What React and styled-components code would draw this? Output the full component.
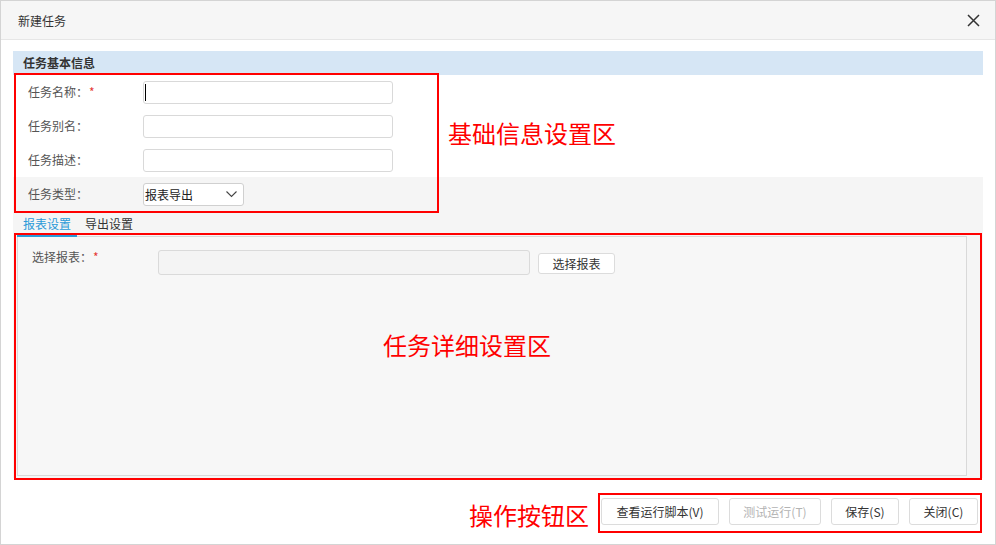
import React from "react";
import styled, { createGlobalStyle } from "styled-components";

const GlobalStyle = createGlobalStyle`
  body {
    margin: 0;
    background: #fff;
    font-family: "Noto Sans CJK SC", "Noto Sans", sans-serif;
    font-size: 12px;
    color: #333;
  }
`;

const Dialog = styled.div`
  position: relative;
  width: 996px;
  height: 545px;
  box-sizing: border-box;
  border: 1px solid #d4d4d4;
  display: flex;
  flex-direction: column;
  background: #fff;
`;

const TitleBar = styled.div`
  height: 39px;
  flex-shrink: 0;
  box-sizing: border-box;
  display: flex;
  align-items: center;
  justify-content: space-between;
  padding: 0 15px 0 17px;
  background: #f6f6f6;
  border-bottom: 1px solid #e6e6e6;
  font-size: 12px;
  color: #333;
`;

const CloseBtn = styled.button`
  border: 0;
  background: none;
  padding: 0;
  width: 14px;
  height: 14px;
  display: flex;
  align-items: center;
  justify-content: center;
  cursor: pointer;
`;

const Body = styled.div`
  padding: 11px 12px 0 12px;
`;

const SectionHeader = styled.div`
  height: 24px;
  line-height: 24px;
  padding-left: 10px;
  background: #d6e6f5;
  font-weight: bold;
  font-size: 12px;
  color: #333;
`;

const Row = styled.div`
  height: 34px;
  display: flex;
  align-items: center;
  padding-left: 15px;
  background: ${(p) => (p.$gray ? "#f5f5f5" : "#fff")};
`;

const Label = styled.span`
  width: ${(p) => p.$width || 115}px;
  flex-shrink: 0;
  color: #555;
  font-size: 12px;
  line-height: 14px;
`;

const Star = styled.span`
  color: #e53935;
  margin-left: 1px;
`;

const InputWrap = styled.span`
  position: relative;
  display: inline-flex;

  &::after {
    content: "";
    display: ${(p) => (p.$caret ? "block" : "none")};
    position: absolute;
    left: 2px;
    top: 3px;
    width: 1px;
    height: 17px;
    background: #000;
  }
`;

const TextInput = styled.input`
  width: 250px;
  height: 23px;
  box-sizing: border-box;
  border: 1px solid #d9d9d9;
  border-radius: 3px;
  padding: 0 2px;
  font: inherit;
  outline: none;
  caret-color: transparent;
  background: #fff;
`;

const Select = styled.div`
  width: 101px;
  height: 23px;
  box-sizing: border-box;
  border: 1px solid #d0d0d0;
  border-radius: 3px;
  background: #fff;
  display: flex;
  align-items: center;
  justify-content: space-between;
  padding: 0 6px 0 1px;
  color: #222;
`;

const GrayArea = styled.div`
  background: #f5f5f5;
  height: 301px;
`;

const TabBar = styled.div`
  height: 25px;
  display: flex;
  gap: 2px;
  padding-left: 4px;
  box-sizing: border-box;
`;

const Tab = styled.div`
  padding: 0 6px;
  display: flex;
  align-items: center;
  box-sizing: border-box;
  border-bottom: 2px solid ${(p) => (p.$active ? "#2a9ad8" : "transparent")};
  color: ${(p) => (p.$active ? "#2a9ad8" : "#333")};
  font-size: 12px;
  margin-bottom: -1px;
  position: relative;
  z-index: 1;
`;

const Panel = styled.div`
  margin: 0 16px 0 4px;
  height: 240px;
  box-sizing: border-box;
  border: 1px solid #d9d9d9;
  background: #f7f7f7;
  padding: 13px 14px;
  display: flex;
  align-items: flex-start;
`;

const WideInput = styled.div`
  width: 372px;
  height: 25px;
  box-sizing: border-box;
  border: 1px solid #dadada;
  border-radius: 3px;
  background: #f4f4f4;
`;

const Button = styled.button`
  height: ${(p) => p.$h || 27}px;
  width: ${(p) => p.$w}px;
  box-sizing: border-box;
  border: 1px solid #dcdcdc;
  border-radius: 3px;
  background: #fff;
  font: inherit;
  font-size: 12px;
  color: ${(p) => (p.disabled ? "#b3b3b3" : "#333")};
  padding: 0;
  cursor: ${(p) => (p.disabled ? "default" : "pointer")};
`;

const SmallButton = styled(Button)`
  margin: 3px 0 0 8px;
`;

const Footer = styled.div`
  display: flex;
  justify-content: flex-end;
  gap: 10px;
  padding: 20px 17px 0 0;
`;

const MarkBox = styled.div`
  position: absolute;
  box-sizing: border-box;
  border: 2px solid #ff0000;
  pointer-events: none;
`;

const MarkText = styled.div`
  position: absolute;
  color: #ff0000;
  font-size: 24px;
  line-height: 30px;
  white-space: nowrap;
  pointer-events: none;
`;

const marks = [
  { left: 13, top: 72, width: 425, height: 140 },
  { left: 13, top: 232, width: 968, height: 247 },
  { left: 597, top: 492, width: 384, height: 40 },
];

const notes = [
  { left: 447, top: 117, text: "基础信息设置区" },
  { left: 382, top: 329, text: "任务详细设置区" },
  { left: 468, top: 499, text: "操作按钮区" },
];

const App = () => {
  return (
    <>
      <GlobalStyle />
      <Dialog>
        <TitleBar>
          <span>新建任务</span>
          <CloseBtn aria-label="close">
            <svg width="13" height="13" viewBox="0 0 13 13">
              <path d="M1 1L12 12M12 1L1 12" stroke="#333" strokeWidth="1.5" fill="none" />
            </svg>
          </CloseBtn>
        </TitleBar>
        <Body>
          <SectionHeader>任务基本信息</SectionHeader>
          <Row>
            <Label>
              任务名称：<Star>*</Star>
            </Label>
            <InputWrap $caret>
              <TextInput />
            </InputWrap>
          </Row>
          <Row>
            <Label>任务别名：</Label>
            <TextInput />
          </Row>
          <Row>
            <Label>任务描述：</Label>
            <TextInput />
          </Row>
          <GrayArea>
            <Row $gray>
              <Label>任务类型：</Label>
              <Select>
                <span>报表导出</span>
                <svg width="11" height="7" viewBox="0 0 11 7">
                  <path d="M0.5 0.5L5.5 5.5L10.5 0.5" stroke="#444" strokeWidth="1.1" fill="none" />
                </svg>
              </Select>
            </Row>
            <TabBar>
              <Tab $active>报表设置</Tab>
              <Tab>导出设置</Tab>
            </TabBar>
            <Panel>
              <Label $width={126}>
                选择报表：<Star>*</Star>
              </Label>
              <WideInput />
              <SmallButton $w={77} $h={21}>
                选择报表
              </SmallButton>
            </Panel>
          </GrayArea>
        </Body>
        <Footer>
          <Button $w={118}>查看运行脚本(V)</Button>
          <Button $w={92} disabled>
            测试运行(T)
          </Button>
          <Button $w={68}>保存(S)</Button>
          <Button $w={69}>关闭(C)</Button>
        </Footer>
        {marks.map((m, i) => (
          <MarkBox key={i} style={{ left: m.left, top: m.top, width: m.width, height: m.height }} />
        ))}
        {notes.map((n, i) => (
          <MarkText key={i} style={{ left: n.left, top: n.top }}>
            {n.text}
          </MarkText>
        ))}
      </Dialog>
    </>
  );
};

export default App;
